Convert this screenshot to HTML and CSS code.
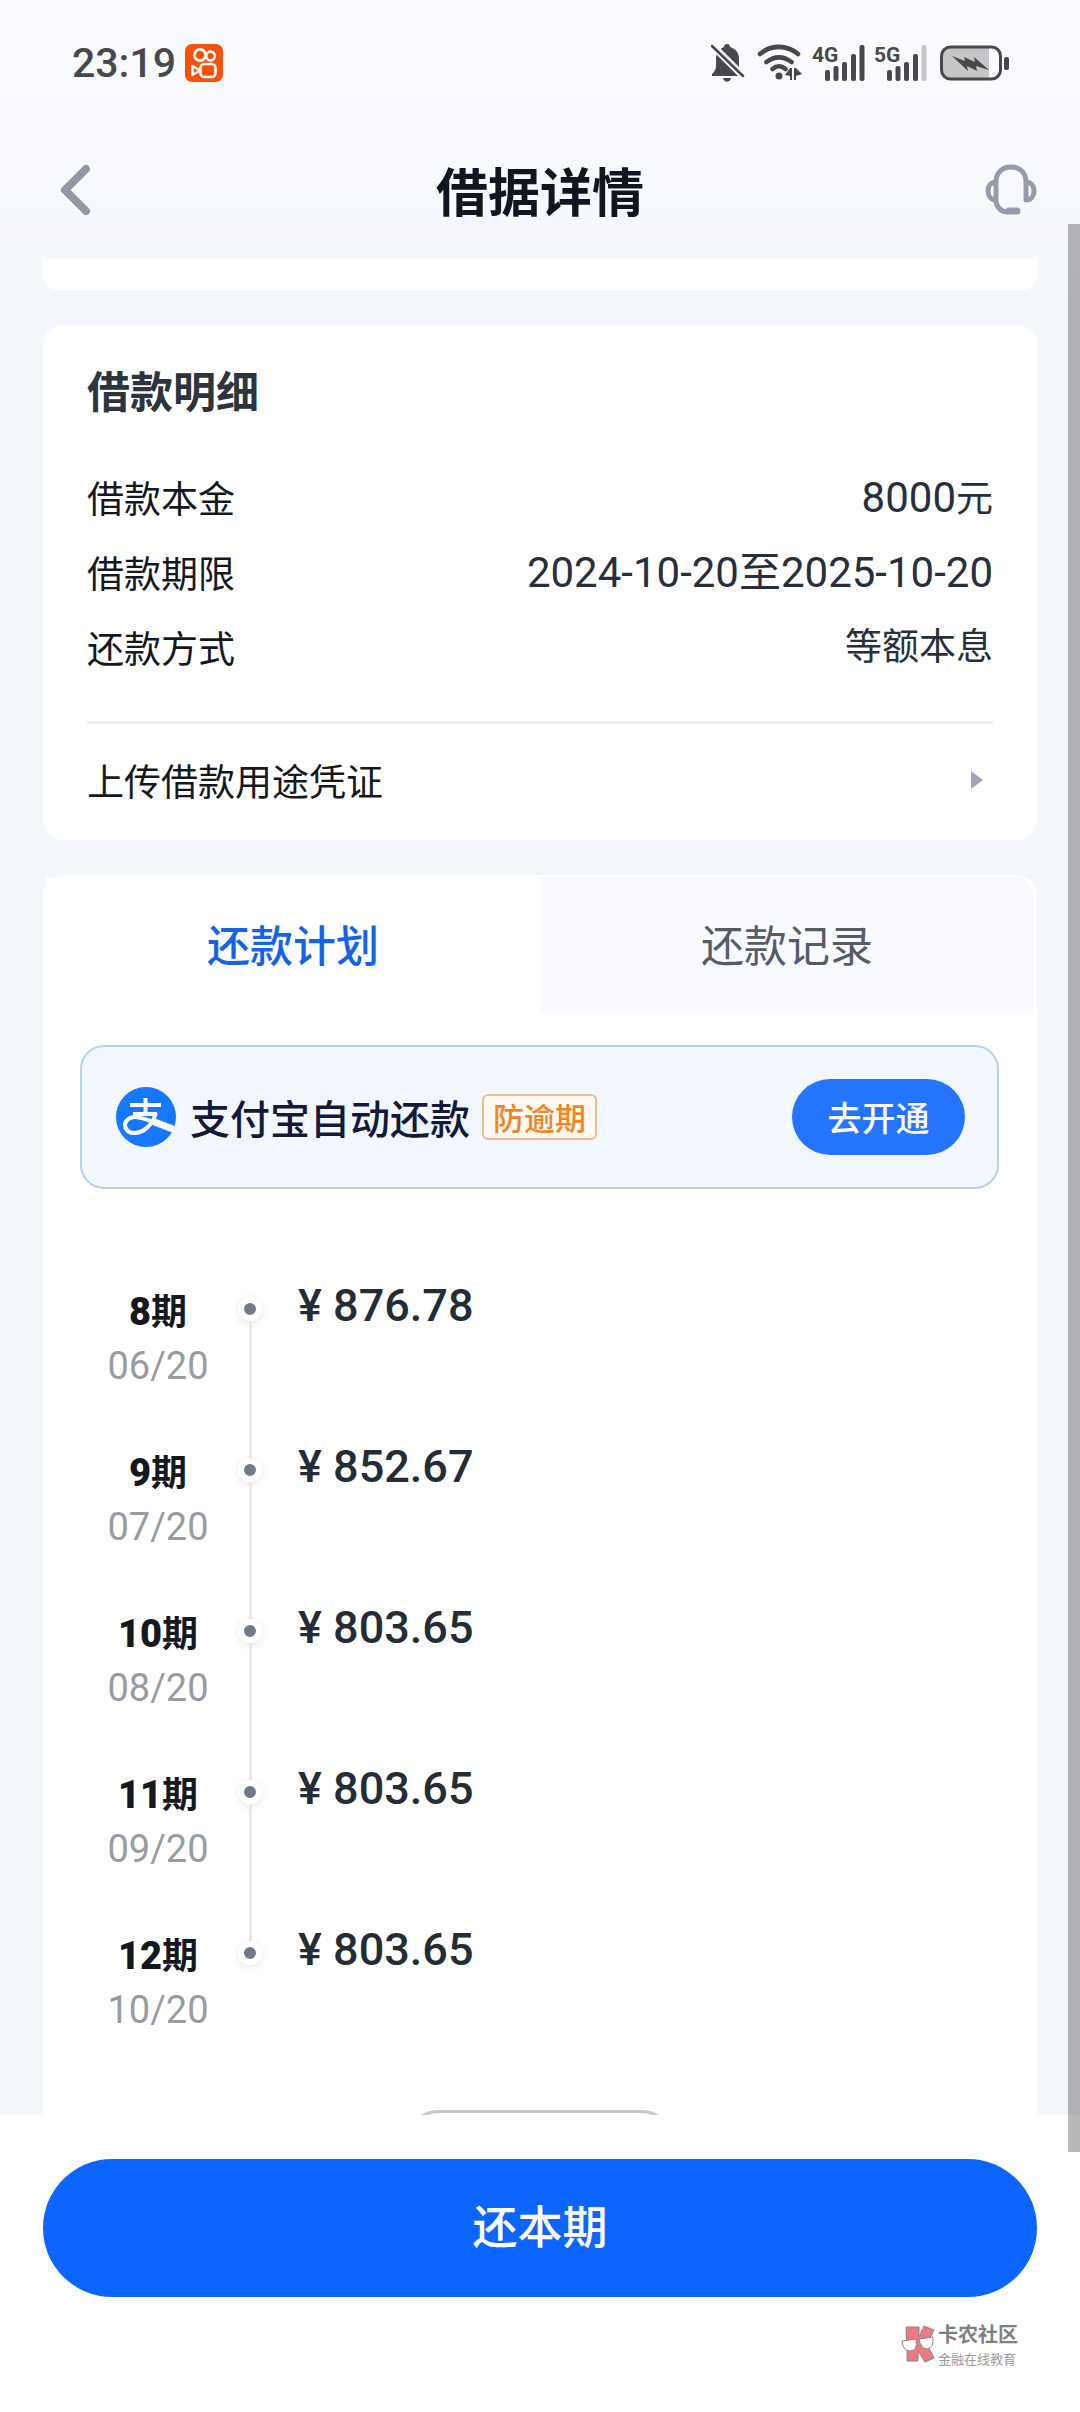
FILE: index.html
```html
<!DOCTYPE html>
<html lang="zh-CN">

<head>
    <meta charset="UTF-8">
    <meta name="viewport" content="width=device-width, initial-scale=1.0">
    <title>借据详情</title>
    <link rel="stylesheet" href="styles.css">
</head>

<body>
    <div class="status-bar">
        <div class="status-left">
            <span class="time">23:19</span>
            <svg class="app-icon" width="38" height="38" viewBox="0 0 38 38" fill="none" stroke="#fff" stroke-width="2.6">
                <rect width="38" height="38" rx="7" fill="#f8520a" stroke="none" />
                <circle cx="15" cy="11" r="5.6" />
                <circle cx="25.5" cy="12" r="4.4" />
                <rect x="15.500" y="20" width="15" height="13" rx="4" />
                <path d="M15 26.500 7.500 22v9z" stroke-linejoin="round" />
            </svg>
        </div>
        <div class="status-right">
            <svg width="34" height="38" viewBox="0 0 34 38" fill="#48484a">
                <path d="M16 0c2 0 3 1 3 3 6 2 9 6 9 12v7c0 4 2 6 4 8v2H1v-2c2-2 4-4 4-8v-7C5 9 8 5 13 3c0-2 1-3 3-3z" />
                <path d="M12 34h8c-1 5-7 5-8 0z" />
                <path d="M0 0 34 34" stroke="#fafbff" stroke-width="7" />
                <path d="M1 2 32 32" stroke="#48484a" stroke-width="2.500" stroke-linecap="round" />
            </svg>
            <svg class="wifi" width="46" height="38" viewBox="0 0 46 38" fill="none" stroke="#48484a" stroke-width="4.600" stroke-linecap="round">
                <path d="M3 10c11-9.500 27-9.500 38 0M9.500 18c8-6 17-6 25 0M15.500 25c4-3.500 9-3.500 13 0" />
                <circle cx="22" cy="32" r="3.500" fill="#48484a" stroke="none" />
                <path d="M33 24h2v12h-2v-4l-5-1zM37 24h2l6 6-6 2v4h-2z" fill="#48484a" stroke="none" />
            </svg>
            <div class="signal">
                <span>4G</span>
                <svg width="40" height="36" viewBox="0 0 40 36" fill="#48484a">
                    <rect y="25" width="5" height="11" rx="2" />
                    <rect x="8.500" y="21" width="5" height="15" rx="2" />
                    <rect x="17" y="17" width="5" height="19" rx="2" />
                    <rect x="26" y="9" width="5" height="27" rx="2" />
                    <rect x="34.500" width="5" height="36" rx="2" />
                </svg>
            </div>
            <div class="signal">
                <span>5G</span>
                <svg width="40" height="36" viewBox="0 0 40 36" fill="#48484a">
                    <rect y="25" width="5" height="11" rx="2" />
                    <rect x="8.500" y="21" width="5" height="15" rx="2" />
                    <rect x="17" y="17" width="5" height="19" rx="2" />
                    <rect x="26" y="9" width="5" height="27" rx="2" />
                    <rect x="34.500" width="5" height="36" rx="2" fill="#c6c6c8" />
                </svg>
            </div>
            <svg class="battery" width="70" height="36" viewBox="0 0 70 36">
                <path d="M10 3h39v30H10q-7 0-7-7V10q0-7 7-7z" fill="#c6c6c8" />
                <rect x="1.500" y="2" width="59" height="32" rx="9" fill="none" stroke="#48484a" stroke-width="3" />
                <rect x="64" y="12" width="5" height="13" rx="2" fill="#48484a" />
                <path d="m12 11 13 5-1-4 11 5-1-5 15 13-13-4 1 5-10-5 1 5z" fill="#48484a" />
            </svg>
        </div>
    </div>

    <header>
        <button class="icon-button back" aria-label="返回">
            <svg width="32" height="54" viewBox="0 0 32 54" fill="none" stroke="#9197a3" stroke-width="8" stroke-linecap="round" stroke-linejoin="round">
                <path d="M27 6 6 27l21 21" />
            </svg>
        </button>
        <h1>借据详情</h1>
        <button class="icon-button" aria-label="客服">
            <svg width="52" height="52" viewBox="0 0 52 52" fill="none" stroke="#959baa" stroke-width="5" stroke-linecap="round" stroke-linejoin="round">
                <path d="M11 35V18C11 8 18 3 26 3s15 5 15 15v18c5 0 8-4 8-9s-3-9-8-9M11 18c-5 0-8 4-8 9s3 9 8 9c0 7 5 12 12 12" />
                <path d="M24 47h8" stroke-width="7" />
            </svg>
        </button>
    </header>

    <main>
        <div class="card card-end"></div>

        <section class="card detail">
            <h2>借款明细</h2>
            <dl>
                <div><dt>借款本金</dt><dd>8000<span>元</span></dd></div>
                <div><dt>借款期限</dt><dd>2024-10-20至2025-10-20</dd></div>
                <div><dt>还款方式</dt><dd class="text">等额本息</dd></div>
            </dl>
            <a class="upload" href="#">上传借款用途凭证
                <svg width="12" height="18" viewBox="0 0 12 18" fill="#a5a5b5"><path d="M0 0 12 9 0 18z" /></svg>
            </a>
        </section>

        <section class="card plan">
            <div class="tabs">
                <button class="tab active">还款计划</button>
                <button class="tab">还款记录</button>
            </div>

            <div class="banner">
                <svg width="60" height="60" viewBox="0 0 60 60">
                    <defs><clipPath id="disc"><circle cx="30" cy="30" r="30" /></clipPath></defs>
                    <circle cx="30" cy="30" r="30" fill="#1677ff" />
                    <g clip-path="url(#disc)" fill="none" stroke="#fff">
                        <path d="M14 18h31M29.500 11v15M17 27h24" stroke-width="4" />
                        <path d="M40 26C36 39 27 46 18 46c-6 0-9-4-9-8s4-8 10-8c11 0 24 9 42 14" stroke-width="4" />
                        <path d="M36 34 62 44" stroke-width="7" />
                    </g>
                </svg>
                <span class="banner-title">支付宝自动还款</span>
                <span class="tag">防逾期</span>
                <button class="open">去开通</button>
            </div>

            <ol class="timeline">
                <li>
                    <div class="period"><strong><b>8</b>期</strong><time>06/20</time></div>
                    <div class="rail"><i></i></div>
                    <div class="amount">¥ 876.78</div>
                </li>
                <li>
                    <div class="period"><strong><b>9</b>期</strong><time>07/20</time></div>
                    <div class="rail"><i></i></div>
                    <div class="amount">¥ 852.67</div>
                </li>
                <li>
                    <div class="period"><strong><b>10</b>期</strong><time>08/20</time></div>
                    <div class="rail"><i></i></div>
                    <div class="amount">¥ 803.65</div>
                </li>
                <li>
                    <div class="period"><strong><b>11</b>期</strong><time>09/20</time></div>
                    <div class="rail"><i></i></div>
                    <div class="amount">¥ 803.65</div>
                </li>
                <li>
                    <div class="period"><strong><b>12</b>期</strong><time>10/20</time></div>
                    <div class="rail"><i></i></div>
                    <div class="amount">¥ 803.65</div>
                </li>
            </ol>

            <button class="more" aria-label="更多"></button>
        </section>
    </main>

    <footer>
        <button class="repay">还本期</button>
        <div class="brand">
            <svg width="36" height="38" viewBox="0 0 36 38" stroke="#858585" stroke-width="1">
                <path d="M6 2h13v10l5-11 10 4-7 14 7 14-9 4-7-11v10H7V22z" fill="#ee7b82" />
                <path d="M2 16 16 14q2 12-6 12-7 0-8-10zM19 14l14-2q1 11-6 12-6 0-8-10z" fill="#fff" />
            </svg>
            <div>
                <div class="brand-name">卡农社区</div>
                <div class="brand-sub">金融在线教育</div>
            </div>
        </div>
    </footer>

    <div class="scrollbar"></div>
</body>

</html>
```
FILE: styles.css
```css
* {
    box-sizing: border-box;
}

body {
    position: relative;
    display: flex;
    flex-direction: column;
    height: 100vh;
    margin: 0;
    overflow: hidden;
    font-family: "Noto Sans CJK SC", sans-serif;
    color: #15181d;
    background: linear-gradient(#fbfcff, #f3f6fb 320px);
}

h1,
h2,
dl,
dd,
ol {
    margin: 0;
    padding: 0;
}

button {
    padding: 0;
    border: none;
    background: none;
    font-family: inherit;
    color: inherit;
    cursor: pointer;
}

svg {
    display: block;
    flex: none;
}

/* status bar */
.status-bar {
    display: flex;
    flex: none;
    justify-content: space-between;
    align-items: center;
    height: 126px;
    padding: 0 70px 0 72px;
    color: #48484a;
}

.status-left,
.status-right {
    display: flex;
    align-items: center;
}

.time {
    font: 500 41px/48px Roboto, sans-serif;
}

.app-icon {
    margin-left: 9px;
}

.wifi {
    margin-left: 12px;
}

.signal {
    position: relative;
    margin-left: 22px;
}

.signal span {
    position: absolute;
    left: -13px;
    top: 0;
    font: 700 21px/20px Roboto, sans-serif;
}

.battery {
    margin-left: 13px;
}

/* header */
header {
    display: flex;
    flex: none;
    justify-content: space-between;
    align-items: center;
    height: 133px;
    padding: 0 43px 6px;
}

.icon-button {
    width: 52px;
}

.back {
    padding-left: 16px;
}

h1 {
    font-size: 52px;
    line-height: 72px;
    font-weight: 700;
    color: #10161f;
}

/* content */
main {
    flex: 1;
    min-height: 0;
    padding: 0 43px;
    overflow: hidden;
}

.card {
    margin-bottom: 35px;
    background: #fff;
    border-radius: 20px;
}

.card-end {
    height: 31px;
    border-radius: 0 0 16px 16px;
}

.detail {
    padding: 36px 44px 0;
}

h2 {
    margin-bottom: 43px;
    font-size: 43px;
    line-height: 56px;
    font-weight: 700;
    color: #2c343e;
}

dl {
    padding-bottom: 36px;
    border-bottom: 3px solid #ecedef;
}

dl div {
    display: flex;
    justify-content: space-between;
    height: 75px;
    font-size: 37px;
    line-height: 75px;
}

dd {
    font-family: Roboto, "Noto Sans CJK SC", sans-serif;
    color: #27303a;
    font-size: 42px;
}

dd.text,
dd span {
    font-size: 37px;
}

.upload {
    display: flex;
    justify-content: space-between;
    align-items: center;
    height: 116px;
    padding: 0 10px 4px 0;
    font-size: 37px;
    color: inherit;
    text-decoration: none;
}

/* repayment plan */
.tabs {
    display: flex;
    padding: 2px 3px 0;
}

.tab {
    flex: 1;
    height: 136px;
    padding-bottom: 4px;
    font-size: 43px;
    background: #f9faff;
    color: #555c66;
}

.tab:last-child {
    border-radius: 0 20px 0 0;
}

.tab.active {
    background: #fff;
    font-weight: 500;
    color: #1463e8;
}

.banner {
    display: flex;
    align-items: center;
    height: 144px;
    margin: 32px 38px 0 37px;
    padding: 0 32px 0 34px;
    border: 2px solid #b5d3ed;
    border-radius: 24px;
    background: #f2f7fe;
}

.banner-title {
    margin-left: 14px;
    font-size: 40px;
    font-weight: 500;
    line-height: 56px;
    color: #14183a;
}

.tag {
    margin-left: 12px;
    padding: 0 9px;
    border: 2px solid #f7b98a;
    border-radius: 6px;
    background: #fffaf5;
    font-size: 31px;
    font-weight: 500;
    line-height: 42px;
    color: #f58420;
}

.open {
    width: 173px;
    height: 76px;
    margin-left: auto;
    padding-bottom: 2px;
    border-radius: 38px;
    background: #2474ff;
    font-size: 34px;
    font-weight: 500;
    color: #fff;
}

.timeline {
    margin: 96px 43px 0;
    list-style: none;
}

.timeline li {
    display: flex;
    height: 161px;
}

.period {
    width: 144px;
    text-align: center;
}

.period strong,
.period time {
    display: block;
    line-height: 48px;
}

.period strong {
    font-size: 36px;
    font-weight: 700;
}

.period b {
    font-family: Roboto, sans-serif;
    font-size: 38px;
}

.period time {
    margin-top: 6px;
    font-family: Roboto, sans-serif;
    font-size: 38px;
    color: #979ca3;
}

.rail {
    display: flex;
    flex-direction: column;
    align-items: center;
    width: 40px;
}

.rail::before,
.rail::after {
    content: "";
    width: 3px;
    height: 12px;
    background: #e8e9ea;
}

.rail::after {
    flex: 1;
}

.timeline li:first-child .rail::before,
.timeline li:last-child .rail::after {
    background: none;
}

.rail i {
    width: 24px;
    height: 24px;
    border: 6px solid #fff;
    border-radius: 50%;
    background: #6f7b8b;
    box-shadow: 0 2px 8px rgba(0, 0, 0, 0.1);
}

.amount {
    margin-left: 28px;
    font: 500 45px/42px Roboto, sans-serif;
    color: #242d36;
}

.more {
    display: block;
    width: 272px;
    height: 70px;
    margin: 20px auto 0;
    border: 3px solid #c8c8c8;
    border-radius: 35px;
}

/* bottom bar */
footer {
    flex: none;
    height: 297px;
    padding: 44px 43px 0;
    background: #fff;
}

.repay {
    width: 100%;
    height: 138px;
    padding-bottom: 8px;
    border-radius: 69px;
    background: #0d65ff;
    font-size: 45px;
    font-weight: 500;
    color: #fff;
}

.brand {
    display: flex;
    justify-content: flex-end;
    align-items: center;
    gap: 2px;
    margin-top: 22px;
    padding-right: 19px;
    color: #808080;
}

.brand-name {
    font-size: 20px;
    font-weight: 700;
    line-height: 30px;
}

.brand-sub {
    font-size: 13px;
    line-height: 20px;
    color: #999;
}

.scrollbar {
    position: absolute;
    top: 224px;
    right: 0;
    bottom: 260px;
    width: 12px;
    background: rgba(0, 0, 0, 0.28);
}
```
